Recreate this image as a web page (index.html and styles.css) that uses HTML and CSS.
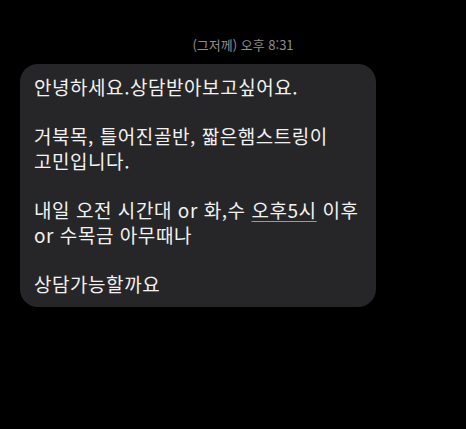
FILE: index.html
```html
<!DOCTYPE html>
<html lang="ko">
<head>
<meta charset="utf-8">
<link rel="stylesheet" href="styles.css">
</head>
<body>
<div class="thread">
  <div class="stamp">(그저께) 오후 8:31</div>
  <div class="bubble">
    <p class="line">안녕하세요.상담받아보고싶어요.</p>
    <p class="line">&nbsp;</p>
    <p class="line">거북목, 틀어진골반, 짧은햄스트링이</p>
    <p class="line">고민입니다.</p>
    <p class="line">&nbsp;</p>
    <p class="line">내일 오전 시간대 or 화,수 <span class="link">오후5시</span> 이후</p>
    <p class="line">or 수목금 아무때나</p>
    <p class="line">&nbsp;</p>
    <p class="line">상담가능할까요</p>
  </div>
</div>
</body>
</html>
```
FILE: styles.css
```css
html, body {
  margin: 0;
  padding: 0;
  background: #000;
  height: 100%;
}
body {
  font-family: "Noto Sans CJK KR", "Noto Sans", sans-serif;
  color: #f2f2f2;
}
.thread {
  display: flex;
  flex-direction: column;
  padding-top: 37px;
}
.stamp {
  align-self: center;
  margin-left: 20px;
  font-size: 13px;
  line-height: 16px;
  color: #8e8e93;
}
.bubble {
  margin-top: 11px;
  margin-left: 20px;
  width: 356px;
  box-sizing: border-box;
  padding: 11px 14px 11px;
  background: #262628;
  border-radius: 18px;
}
.line {
  margin: 0;
  font-size: 19px;
  line-height: 24.6px;
  letter-spacing: 0.55px;
  white-space: nowrap;
}
.link {
  text-decoration: underline;
  text-decoration-color: #9a9a9e;
  text-underline-offset: 3px;
  text-decoration-thickness: 1px;
}
```
